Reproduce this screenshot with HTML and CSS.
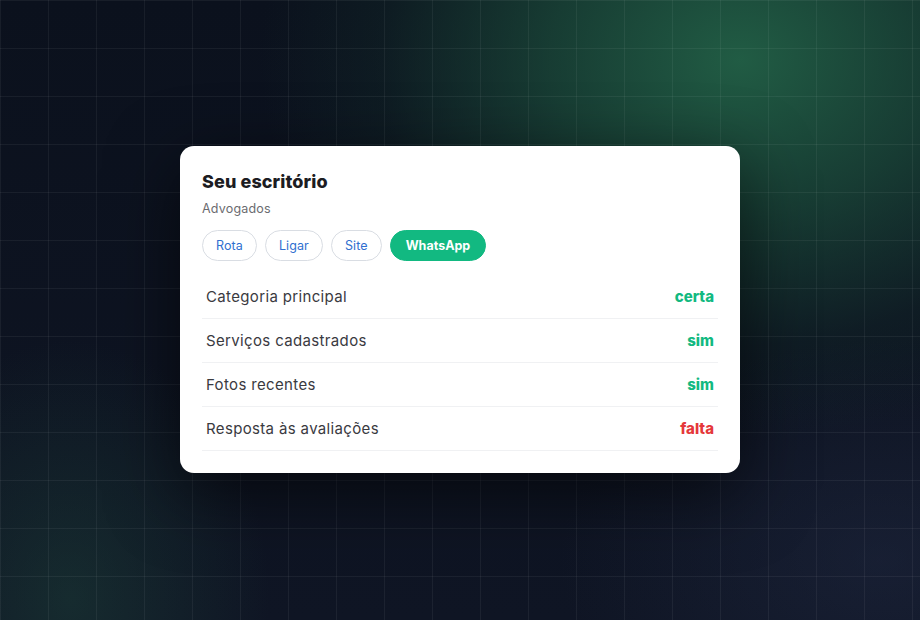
FILE: index.html
```html
<!DOCTYPE html>
<html lang="pt">
<head>
<meta charset="utf-8">
<link rel="stylesheet" href="styles.css">
</head>
<body>
<main class="stage">
  <section class="card">
    <h1 class="title">Seu escritório</h1>
    <p class="subtitle">Advogados</p>
    <div class="actions">
      <span class="chip">Rota</span>
      <span class="chip">Ligar</span>
      <span class="chip">Site</span>
      <span class="chip chip-primary">WhatsApp</span>
    </div>
    <ul class="checks">
      <li class="row"><span class="label">Categoria principal</span><span class="val ok">certa</span></li>
      <li class="row"><span class="label">Serviços cadastrados</span><span class="val ok">sim</span></li>
      <li class="row"><span class="label">Fotos recentes</span><span class="val ok">sim</span></li>
      <li class="row"><span class="label">Resposta às avaliações</span><span class="val bad">falta</span></li>
    </ul>
  </section>
</main>
</body>
</html>
```

FILE: styles.css
```css
* { box-sizing: border-box; }
html, body { margin: 0; padding: 0; }
body {
  width: 920px;
  height: 620px;
  overflow: hidden;
  font-family: "Inter", "Noto Sans", sans-serif;
  background-color: #0b111d;
}
.stage {
  width: 920px;
  height: 620px;
  display: flex;
  align-items: flex-start;
  justify-content: center;
  padding-top: 146px;
  background-image:
    linear-gradient(rgba(255,255,255,0.055) 1px, transparent 1px),
    linear-gradient(90deg, rgba(255,255,255,0.055) 1px, transparent 1px),
    radial-gradient(ellipse 480px 380px at 740px 60px, rgba(34,96,70,0.95), rgba(28,78,60,0.7) 40%, rgba(20,50,45,0.3) 75%, transparent 100%),
    radial-gradient(ellipse 200px 260px at 70px 600px, rgba(35,85,68,0.35), transparent 100%),
    radial-gradient(ellipse 320px 220px at 880px 560px, rgba(40,50,80,0.35), transparent 100%),
    linear-gradient(#0b111d, #0f1524);
  background-size: 48px 48px, 48px 48px, 100% 100%, 100% 100%, 100% 100%, 100% 100%;
}
.card {
  width: 560px;
  background: #ffffff;
  border-radius: 14px;
  padding: 24px 22px 22px;
  box-shadow: 0 20px 70px rgba(0,0,0,0.6);
}
.title {
  margin: 0;
  font-size: 18px;
  font-weight: 800;
  color: #1c1c22;
  letter-spacing: 0.1px;
  line-height: 24px;
}
.subtitle {
  margin: 6px 0 0;
  font-size: 12.5px;
  color: #6b6b70;
  letter-spacing: 0.2px;
  line-height: 18px;
}
.actions {
  display: flex;
  gap: 8px;
  margin-top: 12px;
}
.chip {
  display: inline-flex;
  align-items: center;
  height: 31px;
  padding: 0 13px;
  border: 1px solid #d9dde3;
  border-radius: 999px;
  font-size: 12.5px;
  letter-spacing: 0.1px;
  color: #2f6fd0;
}
.chip-primary {
  background: #12b981;
  border-color: #12b981;
  color: #ffffff;
  font-weight: 700;
  letter-spacing: 0;
  padding: 0 15px;
}
.checks {
  list-style: none;
  margin: 14px 0 0;
  padding: 0;
}
.row {
  display: flex;
  justify-content: space-between;
  align-items: center;
  height: 44px;
  padding: 0 4px;
  border-bottom: 1px solid #f0f1f3;
}
.label {
  font-size: 15px;
  letter-spacing: 0.35px;
  color: #3a3a3f;
}
.val {
  font-size: 15px;
  font-weight: 800;
}
.ok { color: #12b981; }
.bad { color: #e5383b; }
```
